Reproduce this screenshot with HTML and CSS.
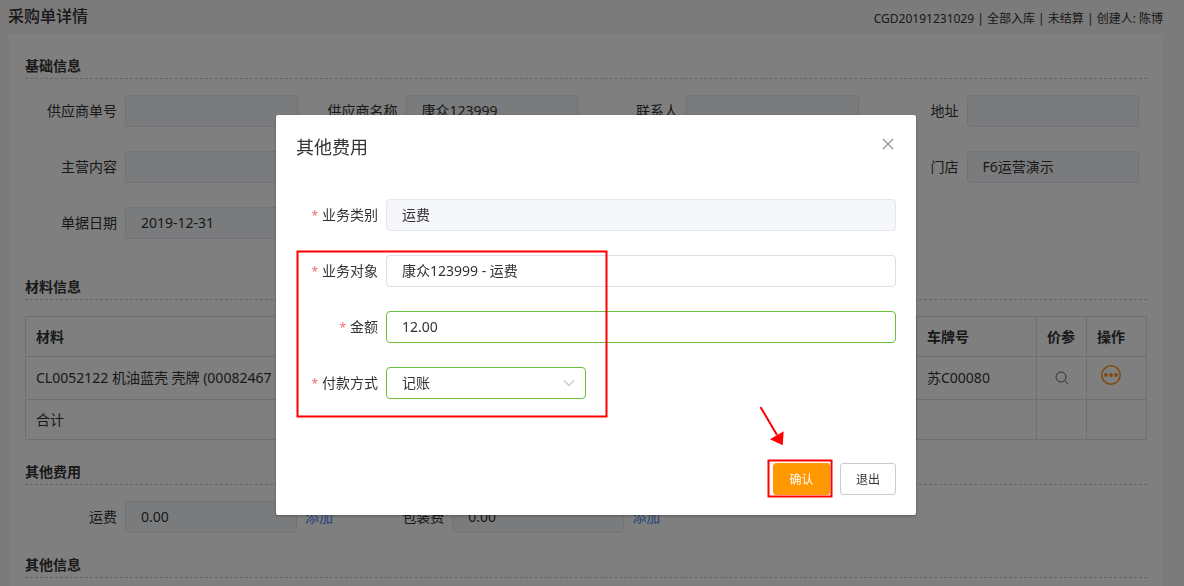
FILE: index.html
```html
<!DOCTYPE html>
<html lang="zh-CN">
<head>
<meta charset="utf-8">
<title>采购单详情</title>
<link rel="stylesheet" href="styles.css">
</head>
<body>
<div class="page">
  <header class="page-header">
    <h1 class="page-title">采购单详情</h1>
    <p class="page-meta">CGD20191231029 | 全部入库 | 未结算 | 创建人: 陈博</p>
  </header>
  <main class="panel">
    <section class="section">
      <h2 class="section-title">基础信息</h2>
      <div class="info-grid">
        <div class="field"><label for="supplierNo">供应商单号</label><input id="supplierNo" class="control" disabled></div>
        <div class="field"><label for="supplier">供应商名称</label><input id="supplier" class="control" value="康众123999" disabled></div>
        <div class="field"><label for="contact">联系人</label><input id="contact" class="control" disabled></div>
        <div class="field"><label for="address">地址</label><input id="address" class="control" disabled></div>
        <div class="field"><label for="business">主营内容</label><input id="business" class="control" disabled></div>
        <div class="field field-last"><label for="store">门店</label><input id="store" class="control" value="F6运营演示" disabled></div>
        <div class="field"><label for="date">单据日期</label><input id="date" class="control" value="2019-12-31" disabled></div>
      </div>
    </section>
    <section class="section section-materials">
      <h2 class="section-title">材料信息</h2>
      <table class="materials">
        <thead>
          <tr><th>材料</th><th class="col-plate">车牌号</th><th class="col-price">价参</th><th class="col-action">操作</th></tr>
        </thead>
        <tbody>
          <tr class="item-row">
            <td>CL0052122 机油蓝壳 壳牌 (00082467</td>
            <td>苏C00080</td>
            <td class="icon-cell">
              <button class="icon-button" type="button" aria-label="价参">
                <svg width="14" height="14" viewBox="0 0 14 14" fill="none" stroke="#606266"><circle cx="6" cy="6" r="5"/><path d="M9.6 9.6 13 13"/></svg>
              </button>
            </td>
            <td class="action-cell">
              <button class="icon-button" type="button" aria-label="操作">
                <svg width="22" height="22" viewBox="0 0 22 22"><circle cx="11" cy="11" r="9.2" fill="none" stroke="#ff9320" stroke-width="1.6"/><g fill="#ff9320"><circle cx="6" cy="11" r="1.9"/><circle cx="11" cy="11" r="1.9"/><circle cx="16" cy="11" r="1.9"/></g></svg>
              </button>
            </td>
          </tr>
          <tr><td>合计</td><td></td><td></td><td></td></tr>
        </tbody>
      </table>
    </section>
    <section class="section">
      <h2 class="section-title">其他费用</h2>
      <div class="fee-grid">
        <div class="field fee"><label for="freight">运费</label><input id="freight" class="control" value="0.00" disabled><a class="add-link" href="#">添加</a></div>
        <div class="field fee"><label for="packing">包装费</label><input id="packing" class="control" value="0.00" disabled><a class="add-link" href="#">添加</a></div>
      </div>
    </section>
    <section class="section">
      <h2 class="section-title">其他信息</h2>
    </section>
  </main>
</div>

<div class="overlay">
  <div class="dialog" role="dialog" aria-modal="true" aria-labelledby="dialogTitle">
    <header class="dialog-header">
      <h2 class="dialog-title" id="dialogTitle">其他费用</h2>
      <button class="icon-button dialog-close" type="button" aria-label="关闭">
        <svg width="16" height="16" viewBox="0 0 16 16" fill="none" stroke="#909399" stroke-width="1.2"><path d="M3 3 13 13M13 3 3 13"/></svg>
      </button>
    </header>
    <form class="dialog-form">
      <div class="field required"><label for="feeType">业务类别</label><input id="feeType" class="control" value="运费" disabled></div>
      <div class="field required"><label for="feeTarget">业务对象</label><input id="feeTarget" class="control" value="康众123999 - 运费"></div>
      <div class="field required"><label for="amount">金额</label><input id="amount" class="control valid" value="12.00"></div>
      <div class="field required">
        <label for="payment">付款方式</label>
        <div class="select-wrap">
          <select id="payment" class="control valid"><option>记账</option></select>
          <svg class="select-arrow" width="14" height="14" viewBox="0 0 14 14" fill="none" stroke="#c0c4cc" stroke-width="1.2"><path d="M2 4.5 7 9.5 12 4.5"/></svg>
        </div>
      </div>
    </form>
    <footer class="dialog-footer">
      <button class="button primary" type="button">确认</button>
      <button class="button" type="button">退出</button>
    </footer>
    <svg class="marks" viewBox="0 0 640 400" fill="none" stroke="#ff0000" stroke-width="2">
      <rect x="21.5" y="136.5" width="309" height="165"/>
      <rect x="492.5" y="345.5" width="63" height="36"/>
      <path d="M484.5 292 501 320"/>
      <path d="M507.7 316.3 494 324.3 506.7 330.3Z" fill="#ff0000" stroke="none"/>
    </svg>
  </div>
</div>
</body>
</html>
```
FILE: styles.css
```css
* {
  box-sizing: border-box;
}

body {
  margin: 0;
  background: #f6f6f6;
  color: #333;
  font: 14px/24px "Noto Sans", "Noto Sans CJK SC", sans-serif;
  overflow: hidden;
}

h1, h2, p {
  margin: 0;
}

input, select, button {
  font: inherit;
  color: inherit;
}

.page {
  display: flex;
  flex-direction: column;
  min-height: 100vh;
  padding: 0 21px 0 8px;
}

.page-header {
  display: flex;
  justify-content: space-between;
  align-items: center;
  height: 34px;
}

.page-title {
  padding-bottom: 2px;
  font-size: 16px;
  font-weight: 500;
}

.page-meta {
  padding-top: 4px;
  font-size: 12px;
}

.panel {
  flex: 1;
  margin-left: 1px;
  padding: 0 16px 8px;
  background: #fff;
}

.section {
  padding-top: 20px;
}

.section-materials {
  padding-top: 12px;
}

.section-title {
  margin-bottom: 16px;
  border-bottom: 1px dashed #ccc;
  font-size: 14px;
  font-weight: 700;
}

.info-grid {
  display: grid;
  grid-template-columns: repeat(4, 1fr);
}

.field {
  display: flex;
  align-items: center;
  margin-bottom: 24px;
  padding-right: 8px;
}

.field-last {
  grid-column: 4;
}

.field label {
  flex: 0 0 100px;
  padding-right: 8px;
  text-align: right;
}

.control {
  flex: 1;
  width: 100%;
  min-width: 0;
  height: 32px;
  padding: 0 15px 2px;
  border: 1px solid #dcdfe6;
  border-radius: 4px;
  background: #fff;
  outline: 0;
}

.control:disabled {
  border-color: #e4e7ed;
  background: #f5f7fa;
}

.control.valid {
  border-color: #67c23a;
}

.materials {
  width: 100%;
  border-collapse: collapse;
  table-layout: fixed;
}

.materials th,
.materials td {
  height: 40px;
  padding: 0 10px;
  border: 1px solid #dfe0e6;
  text-align: left;
}

.materials .item-row td {
  height: 43px;
}

.col-plate {
  width: 120px;
}

.col-price {
  width: 50px;
}

.col-action {
  width: 60px;
}

.materials .icon-cell {
  padding-bottom: 2px;
  text-align: center;
}

.materials .action-cell {
  padding: 0 13px 8px;
}

.icon-button {
  display: inline-flex;
  padding: 0;
  border: 0;
  background: none;
  vertical-align: middle;
}

.fee-grid {
  display: grid;
  grid-template-columns: 7fr 7fr 10fr;
}

.fee {
  margin-bottom: 0;
  padding-right: 0;
}

.fee .control {
  flex: 0 0 172px;
}

.add-link {
  padding-left: 8px;
  color: #4a8af4;
  text-decoration: none;
}

.overlay {
  position: fixed;
  inset: 0;
  display: flex;
  justify-content: center;
  align-items: flex-start;
  padding: 115px 0 0 8px;
  background: rgba(0, 0, 0, 0.5);
}

.dialog {
  position: relative;
  width: 640px;
  padding: 20px;
  border-radius: 2px;
  background: #fff;
  box-shadow: 0 1px 3px rgba(0, 0, 0, 0.3);
}

.dialog-header {
  display: flex;
  justify-content: space-between;
}

.dialog-title {
  font-size: 18px;
  font-weight: 400;
}

.dialog-close {
  height: 18px;
  align-items: center;
}

.dialog-form {
  padding: 40px 0 16px;
}

.dialog-form .field {
  padding-right: 0;
}

.dialog-form .field label {
  flex-basis: 90px;
}

.required label::before {
  content: "*";
  margin-right: 4px;
  color: #f56c6c;
  font-size: 12px;
}

.select-wrap {
  position: relative;
  width: 200px;
}

.select-wrap .control {
  display: block;
  padding-bottom: 0;
  appearance: none;
}

.select-arrow {
  position: absolute;
  top: 9px;
  right: 10px;
  pointer-events: none;
}

.dialog-footer {
  display: flex;
  justify-content: flex-end;
  gap: 10px;
  padding-top: 24px;
}

.button {
  height: 32px;
  padding: 2px 15px 0;
  border: 1px solid #ccc;
  border-radius: 3px;
  background: #fff;
  font-size: 12px;
}

.button.primary {
  width: 57px;
  border-color: #ff9800;
  background: #ff9800;
  color: #fff;
}

.marks {
  position: absolute;
  inset: 0;
  width: 100%;
  height: 100%;
  pointer-events: none;
}
```
